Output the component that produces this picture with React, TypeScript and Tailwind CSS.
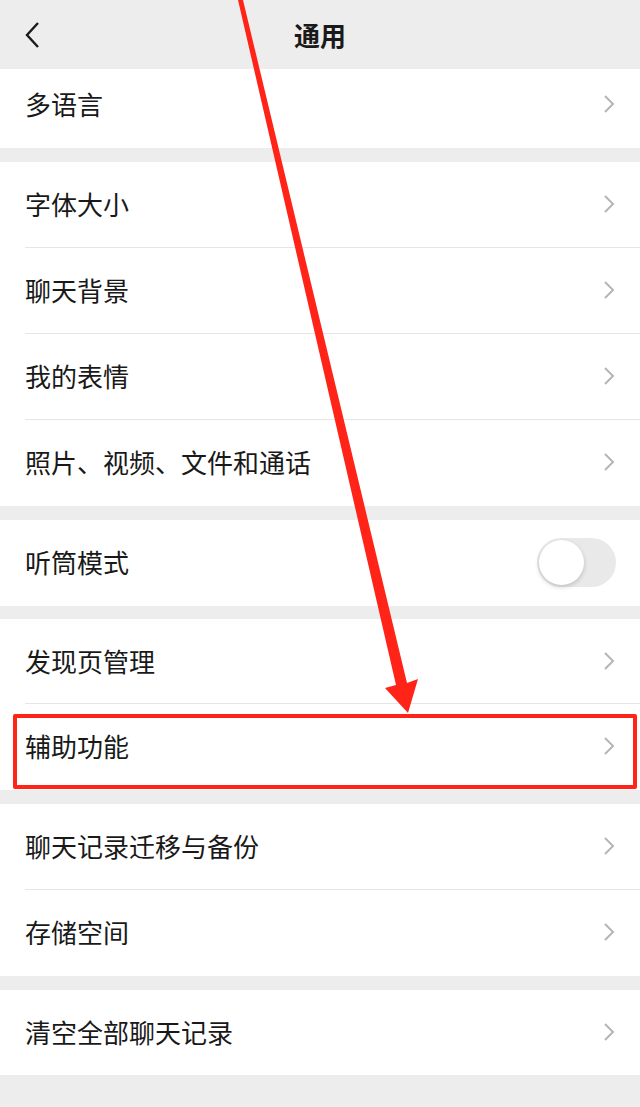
import React from "react";

const font = { fontFamily: '"Noto Sans CJK SC", "Noto Sans", sans-serif' };

function Chevron() {
  return (
    <svg width="14" height="22" viewBox="0 0 14 22" className="shrink-0">
      <path d="M3 3 L11 11 L3 19" fill="none" stroke="#b5b5b5" strokeWidth="2" />
    </svg>
  );
}

function Row({ label, last, children, className = "h-[86px]" }: { label: string; last?: boolean; children?: React.ReactNode; className?: string }) {
  return (
    <div className={`relative flex items-center pl-[25px] pr-[24px] pb-[2px] ${className}`}>
      <span className="flex-1 text-[26px] leading-none text-[#191919]">{label}</span>
      {children ?? <Chevron />}
      {!last && <div className="absolute bottom-0 left-[25px] right-0 h-px bg-[#e6e6e6]" />}
    </div>
  );
}

function Group({ children, className = "" }: { children: React.ReactNode; className?: string }) {
  return <div className={`bg-white ${className}`}>{children}</div>;
}

export default function App() {
  return (
    <div className="relative h-[1107px] w-[640px] overflow-hidden bg-[#ededed]" style={font}>
      <div className="relative flex h-[69px] items-center justify-center">
        <svg width="20" height="30" viewBox="0 0 20 30" className="absolute left-[22px] top-[20px]">
          <path d="M16 3 L5 15 L16 27" fill="none" stroke="#1a1a1a" strokeWidth="2.4" />
        </svg>
        <span className="text-[26px] font-bold leading-none text-[#1a1a1a]">通用</span>
      </div>

      <div className="flex flex-col">
        <Group>
          <Row label="多语言" last className="h-[79px] pb-[10px]" />
        </Group>
        <Group className="mt-[14px]">
          <Row label="字体大小" />
          <Row label="聊天背景" />
          <Row label="我的表情" />
          <Row label="照片、视频、文件和通话" last />
        </Group>
        <Group className="mt-[14px]">
          <Row label="听筒模式" last>
            <div className="flex h-[49px] w-[79px] items-center rounded-full bg-[#e9e9ea] pl-[2px]">
              <div className="h-[45px] w-[45px] rounded-full bg-white shadow-[0_2px_5px_rgba(0,0,0,0.18)]" />
            </div>
          </Row>
        </Group>
        <Group className="mt-[13px]">
          <Row label="发现页管理" className="h-[85px]" />
          <Row label="辅助功能" last />
        </Group>
        <Group className="mt-[14px]">
          <Row label="聊天记录迁移与备份" />
          <Row label="存储空间" last />
        </Group>
        <Group className="mt-[14px]">
          <Row label="清空全部聊天记录" last className="h-[85px]" />
        </Group>
      </div>

      <div className="absolute left-[13px] top-[714px] h-[75px] w-[624px] rounded-[2px] border-[4px] border-[#ff2318]" />

      <svg className="absolute left-0 top-0" width="640" height="1107" viewBox="0 0 640 1107">
        <polygon points="238,0 243,0 407,683 418,679 408,713 385,688 396,685" fill="#ff2318" />
      </svg>
    </div>
  );
}
